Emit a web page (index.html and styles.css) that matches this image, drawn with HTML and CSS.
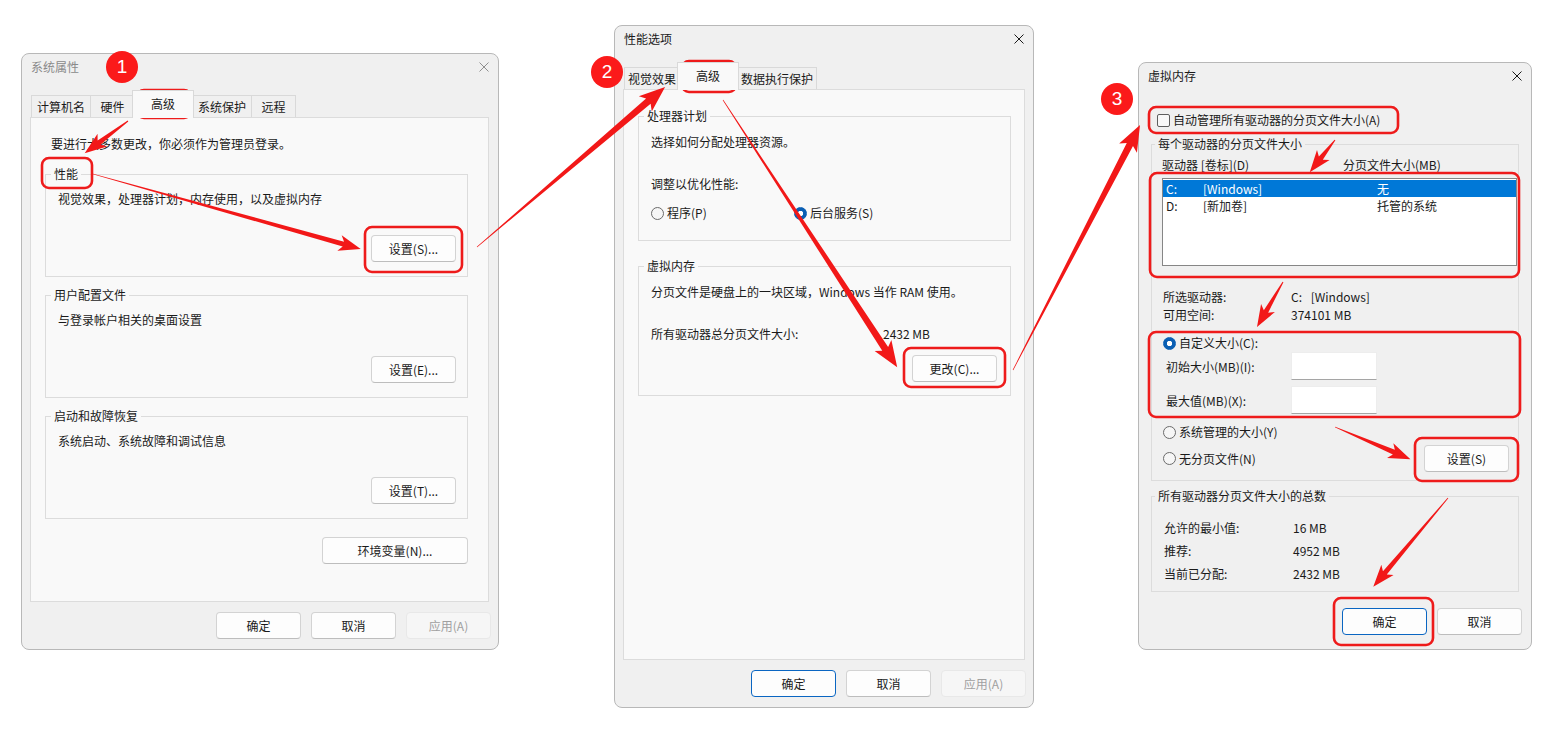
FILE: index.html
```html
<!DOCTYPE html>
<html lang="zh-CN">
<head>
    <meta charset="UTF-8">
    <title>虚拟内存设置步骤</title>
    <link rel="stylesheet" href="styles.css">
</head>
<body>
<div class="desk">

    <!-- 系统属性 -->
    <div class="dlg dlg-sys inactive">
        <div class="titlebar">
            <span>系统属性</span>
            <svg class="close" viewBox="0 0 10 10"><path d="M0.5 0.5 9.5 9.5M9.5 0.5 0.5 9.5"/></svg>
        </div>
        <div class="tabs">
            <div class="tab">计算机名</div>
            <div class="tab">硬件</div>
            <div class="tab sel">高级</div>
            <div class="tab">系统保护</div>
            <div class="tab">远程</div>
        </div>
        <div class="panel panel-sys">
            <p class="note">要进行大多数更改，你必须作为管理员登录。</p>
            <div class="group">
                <span class="group-title">性能</span>
                <p class="desc">视觉效果，处理器计划，内存使用，以及虚拟内存</p>
                <button class="btn">设置(S)...</button>
            </div>
            <div class="group">
                <span class="group-title">用户配置文件</span>
                <p class="desc">与登录帐户相关的桌面设置</p>
                <button class="btn">设置(E)...</button>
            </div>
            <div class="group">
                <span class="group-title">启动和故障恢复</span>
                <p class="desc">系统启动、系统故障和调试信息</p>
                <button class="btn">设置(T)...</button>
            </div>
            <button class="btn btn-env">环境变量(N)...</button>
        </div>
        <div class="footer">
            <button class="btn">确定</button>
            <button class="btn">取消</button>
            <button class="btn" disabled>应用(A)</button>
        </div>
    </div>

    <!-- 性能选项 -->
    <div class="dlg dlg-perf">
        <div class="titlebar">
            <span>性能选项</span>
            <svg class="close" viewBox="0 0 10 10"><path d="M0.5 0.5 9.5 9.5M9.5 0.5 0.5 9.5"/></svg>
        </div>
        <div class="tabs">
            <div class="tab">视觉效果</div>
            <div class="tab sel">高级</div>
            <div class="tab">数据执行保护</div>
        </div>
        <div class="panel panel-perf">
            <div class="group grp-cpu">
                <span class="group-title">处理器计划</span>
                <p class="desc">选择如何分配处理器资源。</p>
                <p class="line2">调整以优化性能:</p>
                <div class="radios">
                    <label class="opt"><span class="radio"></span>程序(P)</label>
                    <label class="opt"><span class="radio on"></span>后台服务(S)</label>
                </div>
            </div>
            <div class="group grp-vmem">
                <span class="group-title">虚拟内存</span>
                <p class="desc">分页文件是硬盘上的一块区域，Windows 当作 RAM 使用。</p>
                <div class="line2 total">
                    <span>所有驱动器总分页文件大小:</span>
                    <span>2432 MB</span>
                </div>
                <button class="btn">更改(C)...</button>
            </div>
        </div>
        <div class="footer">
            <button class="btn default">确定</button>
            <button class="btn">取消</button>
            <button class="btn" disabled>应用(A)</button>
        </div>
    </div>

    <!-- 虚拟内存 -->
    <div class="dlg dlg-vm">
        <div class="titlebar">
            <span>虚拟内存</span>
            <svg class="close" viewBox="0 0 10 10"><path d="M0.5 0.5 9.5 9.5M9.5 0.5 0.5 9.5"/></svg>
        </div>
        <div class="vm-body">
            <label class="opt auto"><span class="check"></span>自动管理所有驱动器的分页文件大小(A)</label>

            <div class="group grp-drives">
                <span class="group-title">每个驱动器的分页文件大小</span>
                <div class="heads">
                    <span>驱动器 [卷标](D)</span>
                    <span>分页文件大小(MB)</span>
                </div>
                <div class="listbox">
                    <div class="lrow sel"><span>C:</span><span>[Windows]</span><span>无</span></div>
                    <div class="lrow"><span>D:</span><span>[新加卷]</span><span>托管的系统</span></div>
                </div>
                <div class="kv">
                    <span>所选驱动器:</span><span>C:&ensp;&nbsp;[Windows]</span>
                    <span>可用空间:</span><span>374101 MB</span>
                </div>
                <label class="opt custom"><span class="radio on"></span>自定义大小(C):</label>
                <div class="size-row">
                    <span>初始大小(MB)(I):</span><span class="field"></span>
                </div>
                <div class="size-row">
                    <span>最大值(MB)(X):</span><span class="field"></span>
                </div>
                <label class="opt managed"><span class="radio"></span>系统管理的大小(Y)</label>
                <div class="last-row">
                    <label class="opt"><span class="radio"></span>无分页文件(N)</label>
                    <button class="btn">设置(S)</button>
                </div>
            </div>

            <div class="group grp-sum">
                <span class="group-title">所有驱动器分页文件大小的总数</span>
                <div class="kv sum">
                    <span>允许的最小值:</span><span>16 MB</span>
                    <span>推荐:</span><span>4952 MB</span>
                    <span>当前已分配:</span><span>2432 MB</span>
                </div>
            </div>
        </div>
        <div class="footer footer-vm">
            <button class="btn default">确定</button>
            <button class="btn">取消</button>
        </div>
    </div>

    <!-- 标注：框和箭头 -->
    <svg class="marks" viewBox="0 0 1565 739" width="1565" height="739">
        <g fill="none" stroke="#ee1b1b" stroke-width="2.6">
            <rect x="137" y="90" width="54" height="28" rx="7"/>
            <rect x="42" y="158" width="50" height="30" rx="7"/>
            <rect x="365" y="227" width="97" height="45" rx="7"/>
            <rect x="682" y="61" width="54" height="31" rx="7"/>
            <rect x="904" y="348" width="101" height="39" rx="7"/>
            <rect x="1149" y="107" width="249" height="26" rx="7"/>
            <rect x="1150" y="173" width="369" height="104" rx="7"/>
            <rect x="1149" y="332" width="371" height="85" rx="7"/>
            <rect x="1415" y="438" width="103" height="43" rx="7"/>
            <rect x="1334" y="598" width="99" height="47" rx="7"/>
        </g>
        <g fill="#f21818">
            <polygon transform="translate(128 121) rotate(143.35)" points="0,-0.5 36,-2.5 32,-8 54,0 32,8 36,2.5 0,0.5"/>
            <polygon transform="translate(93 174) rotate(15.63)" points="0,-0.3 260,-2.5 256,-8 278,0 256,8 260,2.5 0,0.3"/>
            <polygon transform="translate(477 247) rotate(-40.4)" points="0,-0.3 225,-3.5 221,-10 247,0 221,10 225,3.5 0,0.3"/>
            <polygon transform="translate(723 100) rotate(56.9)" points="0,-0.3 297,-3.5 293,-10 319,0 293,10 297,3.5 0,0.3"/>
            <polygon transform="translate(1013 370) rotate(-62.6)" points="0,-0.3 254,-3.5 250,-10 276,0 250,10 254,3.5 0,0.3"/>
            <polygon transform="translate(1335 140) rotate(128)" points="0,-0.5 23,-2.5 19,-8 41,0 19,8 23,2.5 0,0.5"/>
            <polygon transform="translate(1283 282) rotate(120)" points="0,-0.5 34,-2.5 30,-8 52,0 30,8 34,2.5 0,0.5"/>
            <polygon transform="translate(1335 427) rotate(23.1)" points="0,-0.4 64,-2.5 60,-8 82,0 60,8 64,2.5 0,0.4"/>
            <polygon transform="translate(1448 498) rotate(130.1)" points="0,-0.4 98,-2.5 94,-8 116,0 94,8 98,2.5 0,0.4"/>
        </g>
    </svg>

    <div class="badge badge-1">1</div>
    <div class="badge badge-2">2</div>
    <div class="badge badge-3">3</div>
</div>
</body>
</html>
```

FILE: styles.css
```css
* {
    box-sizing: border-box;
}
body {
    margin: 0;
    background: #fff;
    font-family: "Microsoft YaHei UI", "Noto Sans CJK SC", sans-serif;
    font-size: 12px;
    color: #1a1a1a;
}
p {
    margin: 0;
    line-height: 16px;
}
.desk {
    position: relative;
    width: 1565px;
    height: 739px;
    overflow: hidden;
}

/* 窗口外框 */
.dlg {
    position: absolute;
    display: flex;
    flex-direction: column;
    background: #f0f0f0;
    border: 1px solid #b8b8b8;
    border-radius: 8px;
}
.dlg-sys { left: 21px; top: 53px; width: 478px; height: 597px; }
.dlg-perf { left: 614px; top: 25px; width: 420px; height: 683px; }
.dlg-vm { left: 1138px; top: 62px; width: 394px; height: 588px; }

.titlebar {
    flex: none;
    height: 34px;
    display: flex;
    justify-content: space-between;
    align-items: flex-start;
    padding: 5px 9px 0;
    line-height: 16px;
}
.close {
    width: 10px;
    height: 10px;
    margin-top: 3px;
    stroke: #1a1a1a;
    stroke-width: 1;
}
.inactive .titlebar { color: #8a8a8a; }
.inactive .close { stroke: #8f8f8f; }

/* 选项卡 */
.tabs {
    flex: none;
    height: 29px;
    display: flex;
    align-items: flex-end;
    padding-left: 9px;
}
.tab {
    height: 22px;
    min-width: 45px;
    padding: 0 5px;
    line-height: 21px;
    text-align: center;
    background: #f0f0f0;
    border: 1px solid #d9d9d9;
    border-bottom: none;
    margin-right: -1px;
    white-space: nowrap;
}
.dlg-perf .tab {
    padding: 0 3px;
}
.tab.sel {
    position: relative;
    z-index: 1;
    height: 28px;
    line-height: 25px;
    padding: 0 18px;
    margin: 0 -2px -1px;
    background: #f9f9f9;
}

.panel {
    flex: none;
    display: flex;
    flex-direction: column;
    background: #f9f9f9;
    border: 1px solid #dcdcdc;
}

/* 分组框 */
.group {
    flex: none;
    display: flex;
    flex-direction: column;
    border: 1px solid #dcdcdc;
    padding: 0 11px 14px 12px;
}
.group-title {
    align-self: flex-start;
    margin: -9px 0 0 -7px;
    padding: 0 3px;
    line-height: 16px;
    background: #f0f0f0;
}
.panel .group-title {
    background: #f9f9f9;
}
.group > .btn {
    margin-top: auto;
    align-self: flex-end;
}
.desc {
    margin-top: 9px;
}

/* 按钮 */
.btn {
    width: 85px;
    height: 27px;
    padding: 0;
    font: inherit;
    color: #1a1a1a;
    background: #fdfdfd;
    border: 1px solid #d3d3d3;
    border-bottom-color: #bdbdbd;
    border-radius: 4px;
}
.btn.default {
    border-color: #0a66c2;
}
.btn:disabled {
    color: #a0a0a0;
    background: #f6f6f6;
    border-color: #e8e8e8;
}
.footer {
    display: flex;
    justify-content: flex-end;
    gap: 10px;
    padding: 10px 7px 0;
}

/* 单选框 / 复选框 */
.opt {
    display: flex;
    align-items: center;
    gap: 3px;
    line-height: 16px;
}
.radio {
    flex: none;
    width: 13px;
    height: 13px;
    border-radius: 50%;
    border: 1px solid #6b6b6b;
    background: #f6f6f6;
}
.radio.on {
    border-color: #0a5fb4;
    background: radial-gradient(circle, #fff 0 2.4px, #0a5fb4 3px);
}
.check {
    flex: none;
    width: 13px;
    height: 13px;
    border: 1px solid #5e5e5e;
    border-radius: 2px;
    background: #f8f8f8;
}

/* 系统属性 */
.panel-sys {
    height: 485px;
    margin: 0 9px 0 8px;
    padding: 18px 20px 0 14px;
}
.panel-sys .note {
    margin-left: 6px;
}
.panel-sys .group {
    height: 103px;
    margin-top: 18px;
}
.panel-sys .note + .group {
    margin-top: 22px;
}
.btn-env {
    width: 146px;
    margin-top: 18px;
    align-self: flex-end;
}

/* 性能选项 */
.panel-perf {
    height: 571px;
    margin: 0 8px;
    padding: 26px 13px 0 14px;
}
.panel-perf .group {
    padding-right: 13px;
    padding-bottom: 13px;
}
.panel-perf .desc {
    margin-top: 10px;
}
.grp-cpu { height: 125px; }
.grp-vmem { height: 130px; margin-top: 25px; }
.line2 {
    margin-top: 26px;
    line-height: 16px;
}
.radios {
    display: flex;
    margin-top: 13px;
}
.radios .opt {
    width: 143px;
}
.total {
    display: grid;
    grid-template-columns: 232px auto;
}

/* 虚拟内存 */
.vm-body {
    display: flex;
    flex-direction: column;
    padding: 0 12px;
}
.auto {
    margin: 15px 0 0 6px;
}
.grp-drives {
    height: 337px;
    margin-top: 16px;
    padding: 0 1px 8px 10px;
}
.heads {
    display: grid;
    grid-template-columns: 181px 1fr;
    margin-top: 5px;
    line-height: 16px;
}
.listbox {
    height: 89px;
    margin-top: 5px;
    padding-top: 1px;
    background: #fff;
    border: 1px solid #868686;
}
.lrow {
    display: grid;
    grid-template-columns: 37px 174px 1fr;
    height: 17px;
    line-height: 17px;
    padding-left: 3px;
}
.lrow.sel {
    background: #0078d7;
    color: #fff;
}
.kv {
    display: grid;
    grid-template-columns: 128px 1fr;
    line-height: 18px;
    margin: 22px 0 0 1px;
}
.custom {
    margin: 11px 0 0 1px;
}
.size-row {
    display: grid;
    grid-template-columns: 125px 86px;
    align-items: center;
    margin: 6px 0 0 4px;
}
.custom + .size-row {
    margin-top: 1px;
}
.field {
    height: 28px;
    background: #fff;
    border: 1px solid #ededed;
    border-bottom-color: #a5a5a5;
}
.managed {
    margin: 10px 0 0 1px;
}
.last-row {
    display: flex;
    justify-content: space-between;
    align-items: center;
    margin: 5px 8px 0 1px;
}
.grp-sum {
    height: 96px;
    margin-top: 15px;
    padding: 0 1px 0 10px;
}
.kv.sum {
    grid-template-columns: 129px 1fr;
    line-height: 23px;
    margin: 12px 0 0 2px;
}
.footer-vm {
    padding: 16px 9px 0;
}

/* 标注 */
.marks {
    position: absolute;
    left: 0;
    top: 0;
    pointer-events: none;
}
.badge {
    position: absolute;
    width: 32px;
    height: 32px;
    border-radius: 50%;
    background: #fb1a1a;
    color: #fff;
    font-family: "Liberation Sans", Arial, sans-serif;
    font-size: 19px;
    line-height: 32px;
    text-align: center;
}
.badge-1 { left: 106px; top: 51px; }
.badge-2 { left: 591px; top: 56px; }
.badge-3 { left: 1101px; top: 83px; }
```
